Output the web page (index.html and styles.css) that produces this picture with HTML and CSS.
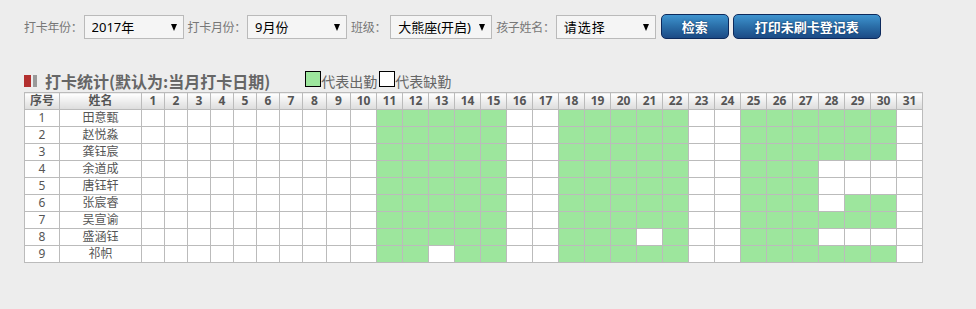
FILE: index.html
```html
<!DOCTYPE html>
<html lang="zh-CN">
<head>
  <meta charset="UTF-8" />
  <title>打卡统计</title>
  <link rel="stylesheet" href="styles.css">
</head>
<body>
  <div class="toolbar">
    <span class="label">打卡年份：</span>
    <span class="select-wrap"><select class="sel"><option>2017年</option></select></span>
    <span class="label">打卡月份：</span>
    <span class="select-wrap"><select class="sel"><option>9月份</option></select></span>
    <span class="label label-short">班级：</span>
    <span class="select-wrap w102"><select class="sel"><option>大熊座(开启)</option></select></span>
    <span class="label">孩子姓名：</span>
    <span class="select-wrap"><select class="sel spaced"><option>请选择</option></select></span>
    <button class="btn btn-search">检索</button>
    <button class="btn btn-print">打印未刷卡登记表</button>
  </div>

  <div class="stat-title">
    <span class="mark-red"></span><span class="mark-gray"></span>
    <h2>打卡统计(默认为:当月打卡日期)</h2>
    <span class="legend-box green"></span><span class="legend-text">代表出勤</span>
    <span class="legend-box"></span><span class="legend-text">代表缺勤</span>
  </div>

  <table class="att-table">
    <colgroup id="cols"></colgroup>
    <thead><tr id="head-row"><th>序号</th><th>姓名</th></tr></thead>
    <tbody id="att-body"></tbody>
  </table>

  <script>
    const workDays = [11,12,13,14,15,18,19,20,21,22,25,26,27,28,29,30];
    const students = [
      { name: "田意甄", absent: [] },
      { name: "赵悦淼", absent: [] },
      { name: "龚钰宸", absent: [] },
      { name: "余道成", absent: [28,29,30] },
      { name: "唐钰轩", absent: [28,29,30] },
      { name: "张宸睿", absent: [28] },
      { name: "吴宣谕", absent: [] },
      { name: "盛涵钰", absent: [21,28,29,30] },
      { name: "祁帜", absent: [13] }
    ];

    const cols = document.getElementById("cols");
    const headRow = document.getElementById("head-row");
    [35, 82].forEach(w => {
      const c = document.createElement("col");
      c.style.width = w + "px";
      cols.appendChild(c);
    });
    for (let d = 1; d <= 31; d++) {
      const c = document.createElement("col");
      c.style.width = (d < 8 ? 23 : d < 10 ? 24 : 26) + "px";
      cols.appendChild(c);
      const th = document.createElement("th");
      th.textContent = d;
      headRow.appendChild(th);
    }

    const body = document.getElementById("att-body");
    students.forEach((s, i) => {
      const tr = document.createElement("tr");
      let html = `<td>${i + 1}</td><td>${s.name}</td>`;
      for (let d = 1; d <= 31; d++) {
        const on = workDays.includes(d) && !s.absent.includes(d);
        html += `<td class="${on ? "present" : ""}"></td>`;
      }
      tr.innerHTML = html;
      body.appendChild(tr);
    });
  </script>
</body>
</html>
```

FILE: styles.css
```css
body {
  margin: 0;
  background: #ededed;
  font-family: "Noto Sans", "Noto Sans CJK SC", sans-serif;
  color: #555;
}
.toolbar {
  display: flex;
  align-items: center;
  padding: 14px 0 0 24px;
  height: 25px;
}
.label {
  font-size: 12px;
  color: #777;
  margin-right: 1px;
  letter-spacing: -0.3px;
  white-space: nowrap;
}
.label.label-short {
  margin-right: 4px;
}
.select-wrap {
  position: relative;
  display: inline-block;
  width: 100px;
  height: 24px;
  margin-right: 4px;
}
.select-wrap.w102 {
  width: 102px;
}
.select-wrap::after {
  content: "";
  position: absolute;
  right: 7px;
  top: 9px;
  border-left: 3.5px solid transparent;
  border-right: 3.5px solid transparent;
  border-top: 7px solid #000;
  pointer-events: none;
}
.sel {
  appearance: none;
  -webkit-appearance: none;
  width: 100%;
  height: 24px;
  margin: 0;
  padding: 0 0 0 7px;
  border: 1px solid #bababa;
  border-radius: 0;
  background: #f5f5f5;
  color: #000;
  font-family: "Noto Sans", "Noto Sans CJK SC", sans-serif;
  font-size: 13px;
  line-height: 22px;
}
.sel.spaced {
  letter-spacing: 1px;
}
.btn {
  height: 25px;
  margin: 0 4px 0 1px;
  padding: 0;
  border: 1px solid #0d2a5c;
  border-radius: 5px;
  background: linear-gradient(#3f94cf, #2a6ea8 50%, #1c4a85);
  color: #fff;
  font-family: "Noto Sans CJK SC", sans-serif;
  font-size: 13px;
  font-weight: bold;
  text-shadow: 0 0 2px #0b2a55;
  cursor: pointer;
}
.btn-search {
  width: 68px;
}
.btn-print {
  width: 148px;
  margin-left: 0;
}
.stat-title {
  display: flex;
  align-items: flex-end;
  height: 20px;
  margin: 32px 0 0 24px;
}
.mark-red {
  width: 7px;
  height: 12px;
  background: #b3302f;
  margin-bottom: 4px;
}
.mark-gray {
  width: 4px;
  height: 12px;
  background: #9a9a9a;
  margin: 0 0 4px 2px;
}
.stat-title h2 {
  margin: 0 35px 0 8px;
  font-size: 16px;
  font-weight: bold;
  color: #666;
  line-height: 20px;
  font-family: "Noto Sans CJK SC", sans-serif;
}
.legend-box {
  width: 14px;
  height: 14px;
  border: 1px solid #000;
  background: #fff;
  margin-bottom: 4px;
}
.legend-box.green {
  background: #9de69d;
}
.legend-text {
  font-size: 14px;
  color: #666;
  line-height: 18px;
  margin-right: 2px;
}
.att-table {
  margin: 1px 0 0 24px;
  border-collapse: collapse;
  table-layout: fixed;
  font-size: 12px;
}
.att-table th,
.att-table td {
  height: 16px;
  padding: 0;
  border: 1px solid #bbb;
  text-align: center;
  line-height: 16px;
  white-space: nowrap;
}
.att-table th {
  background: linear-gradient(#fff, #dcdcdc);
  font-weight: bold;
  color: #555;
}
.att-table td {
  background: #fff;
}
.att-table td.present {
  background: #9de69d;
}
```
